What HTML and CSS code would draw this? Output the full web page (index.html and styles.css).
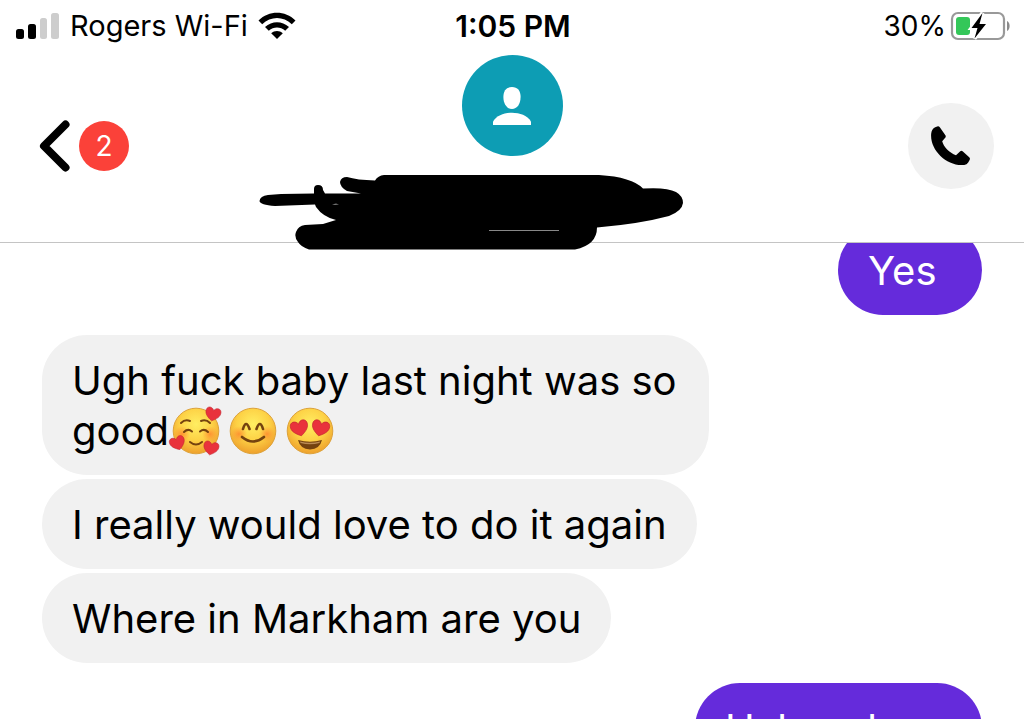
FILE: index.html
```
<!DOCTYPE html>
<html lang="en">

<head>
    <meta charset="UTF-8">
    <meta name="viewport" content="width=device-width, initial-scale=1.0">
    <title>Messages</title>
    <link rel="stylesheet" href="styles.css">
</head>

<body>
    <div class="phone">
        <header class="header">
            <div class="status-bar">
                <div class="status-left">
                    <svg class="signal" width="44" height="28" viewBox="0 0 44 28" aria-hidden="true">
                        <rect x="0" y="17" width="8" height="10" rx="2.5" fill="#000" />
                        <rect x="12" y="12" width="8" height="15" rx="2.5" fill="#000" />
                        <rect x="24" y="6" width="7" height="21" rx="2.5" fill="#cdcdcd" />
                        <rect x="35" y="1" width="8" height="26" rx="2.5" fill="#cdcdcd" />
                    </svg>
                    <span class="carrier">Rogers Wi-Fi</span>
                    <svg class="wifi" width="38" height="28" viewBox="0 0 38 28" aria-hidden="true">
                        <path d="M0.5 8.5C11 -1.8 27 -1.8 37.5 8.5L33.8 12.2C25.2 4 12.8 4 4.2 12.2Z" />
                        <path d="M7 15C14 8.6 24 8.6 31 15L27.2 18.7C22.3 14.5 15.7 14.5 10.8 18.7Z" />
                        <path d="M13.2 21.2C16.6 18.3 21.4 18.3 24.8 21.2L19 27Z" />
                    </svg>
                </div>
                <div class="clock">1:05 PM</div>
                <div class="status-right">
                    <span>30%</span>
                    <svg class="battery" width="60" height="30" viewBox="0 0 60 30" aria-hidden="true">
                        <rect x="2" y="2" width="52" height="26" rx="6" fill="#fff" stroke="#999" stroke-width="2.2" />
                        <path d="M57 10C60.500 11.500 60.500 18.500 57 20Z" fill="#8a8a8a" />
                        <rect x="6" y="6" width="14" height="18" rx="3" fill="#34c759" />
                        <path d="M32.500 2L21.500 17H27.500L24.500 27.500L36 13H29.500Z" fill="#000" stroke="#fff" stroke-width="4" paint-order="stroke" />
                    </svg>
                </div>
            </div>

            <div class="contact-bar">
                <button type="button" class="back-btn" aria-label="Back, 2 unread">
                    <svg width="32" height="52" viewBox="0 0 32 52" aria-hidden="true">
                        <path d="M27.500 4.500L6 26L27.500 47.500" fill="none" stroke="#000" stroke-width="8" stroke-linecap="round" stroke-linejoin="round" />
                    </svg>
                    <span class="unread">2</span>
                </button>
                <div class="avatar">
                    <svg width="38" height="38" viewBox="0 0 38 38" aria-hidden="true">
                        <path d="M19 0C24.5 0 27.600 3.500 27.600 10C27.600 17 24 22 19 22C14 22 10.400 17 10.400 10C10.400 3.500 13.500 0 19 0Z" fill="#fff" />
                        <path d="M0 38V34.500C4 28.500 11 25.800 19 25.800C27 25.800 34 28.500 38 34.500V38Z" fill="#fff" />
                    </svg>
                </div>
                <button type="button" class="call-btn" aria-label="Call">
                    <svg width="40" height="40" viewBox="0 0 40 40" aria-hidden="true">
                        <path d="M4.200 1.300L6.200 0.400Q7.800 -0.200 8.800 1.300L14.400 9.200Q15.200 10.600 14.200 11.800L11.200 15.300C12.500 20.800 18.500 27 25 29.300L29 25.400Q30.300 24.400 31.600 25.300L38.200 31.200Q39.500 32.400 38.600 34L37.200 36.400Q35.800 38.600 33.200 38.900C16 40.800 -1.500 24 0.200 7.500Q0.600 3 4.200 1.300Z" />
                    </svg>
                </button>
            </div>

            <!-- marker scribble over the contact name -->
            <svg class="scribble" width="426" height="76" viewBox="0 0 426 76" aria-hidden="true">
                <path d="M0.500 26Q1 21 9 20L22 19L55 18.500V14Q55 10 59 10Q64 10 64 15L66 18.500H102L88 16Q81 12 81 7Q82 2 88 2Q98 5 116 5.500Q119 0.500 125 0H340Q373 2 384 13.500Q408 12 417 17Q424 21 424 28Q423 36 410 41Q380 49 338 52.500Q338 70 316 74.500H50Q42 72 39 67Q35 62 37 57Q39 51 46 50L64 49L77 45Q64 42 57 32L56 29.500L16 31Q1 30 0.500 26Z" />
                <path d="M73 29.500L77 28.500L80 29.500L76 30Z" fill="#777" />
                <path d="M230 55.500H300" stroke="#888" stroke-width="1" />
            </svg>
        </header>

        <main class="messages">
            <p class="bubble sent">Yes</p>

            <div class="group">
                <p class="bubble received">Ugh fuck baby last night was so good<span class="emojis" role="img" aria-label="smiling faces"><svg class="emoji" viewBox="0 0 48 48">
                            <defs>
                                <radialGradient id="face" cx="50%" cy="35%" r="65%">
                                    <stop offset="0" stop-color="#ffee62" />
                                    <stop offset="0.550" stop-color="#fdd145" />
                                    <stop offset="1" stop-color="#eea02c" />
                                </radialGradient>
                                <radialGradient id="blush">
                                    <stop offset="0" stop-color="#ff7a2a" stop-opacity="0.700" />
                                    <stop offset="1" stop-color="#ff8a30" stop-opacity="0" />
                                </radialGradient>
                                <path id="heart" d="M0 7C-5 4 -8 1 -7.500 -3C-7 -7 -2 -7.500 0 -3.500C2 -7.500 7 -7 7.500 -3C8 1 5 4 0 7Z" />
                            </defs>
                            <circle cx="24" cy="24" r="22.800" fill="url(#face)" stroke="#dda23a" stroke-width="1" />
                            <circle cx="10" cy="27" r="8" fill="url(#blush)" />
                            <circle cx="38" cy="27" r="8" fill="url(#blush)" />
                            <g fill="none" stroke="#74420f" stroke-width="2" stroke-linecap="round">
                                <path d="M9 16Q13 12 18 14M29 14Q34 12 38 16" />
                                <path d="M12 25Q16 21 20 24.500M28 24.500Q32 21 36 25" />
                                <path d="M18 35Q24 40 30 35" />
                            </g>
                            <g fill="#e9323c" stroke="#bd202c" stroke-width="0.500">
                                <use href="#heart" transform="translate(41 7) rotate(12)" />
                                <use href="#heart" transform="translate(5.500 36) rotate(-20)" />
                                <use href="#heart" transform="translate(39 41) rotate(12)" />
                            </g>
                        </svg><svg class="emoji" viewBox="0 0 48 48">
                            <circle cx="24" cy="24" r="22.800" fill="url(#face)" stroke="#dda23a" stroke-width="1" />
                            <circle cx="10" cy="27" r="8" fill="url(#blush)" />
                            <circle cx="38" cy="27" r="8" fill="url(#blush)" />
                            <g fill="none" stroke="#74420f" stroke-width="2.600" stroke-linecap="round">
                                <path d="M14 22Q17 12 20.500 22M27.500 22Q31 12 34 22" />
                                <path d="M13 30Q24 39 35 30" />
                            </g>
                        </svg><svg class="emoji" viewBox="0 0 48 48">
                            <circle cx="24" cy="24" r="22.800" fill="url(#face)" stroke="#dda23a" stroke-width="1" />
                            <g fill="#e9323c" stroke="#bd202c" stroke-width="0.500">
                                <use href="#heart" transform="translate(13.500 21) rotate(-14) scale(1.150)" />
                                <use href="#heart" transform="translate(34.500 21) rotate(14) scale(1.150)" />
                            </g>
                            <path d="M12 33Q24 36.500 36 33Q34 42 24 42.500Q14 42 12 33Z" fill="#74420f" />
                            <path d="M14 34.500Q24 37 34 34.500L33.500 36Q24 38.500 14.500 36Z" fill="#b98a55" />
                        </svg></span></p>
                <p class="bubble received">I really would love to do it again</p>
                <p class="bubble received">Where in Markham are you</p>
            </div>

            <p class="bubble sent">Haha where</p>
        </main>
    </div>
</body>

</html>
```
FILE: styles.css
```
* {
    box-sizing: border-box;
}

body {
    margin: 0;
    font-family: Inter, "Liberation Sans", sans-serif;
    background-color: #fff;
    color: #000;
}

.phone {
    height: 100vh;
    overflow: hidden;
}

.header {
    position: relative;
    z-index: 1;
    background-color: #fff;
    border-bottom: 1px solid #c4c4c4;
}

.status-bar {
    display: grid;
    grid-template-columns: 1fr auto 1fr;
    align-items: center;
    height: 52px;
    padding: 0 14px 0 16px;
    font-size: 28px;
    line-height: 52px;
}

.status-left,
.status-right {
    display: flex;
    align-items: center;
}

.status-left {
    gap: 10px;
}

.status-right {
    justify-content: flex-end;
    gap: 4px;
}

.status-bar svg {
    display: block;
    flex: none;
}

.carrier {
    font-size: 29px;
}

.clock {
    font-size: 30px;
    font-weight: 600;
}

.contact-bar {
    display: grid;
    grid-template-columns: 1fr auto 1fr;
    align-items: center;
    height: 190px;
    padding: 3px 30px 5px;
}

.back-btn {
    display: flex;
    align-items: center;
    gap: 9px;
    justify-self: start;
    padding: 0 8px;
    border: none;
    background: none;
    font-family: inherit;
    cursor: pointer;
}

.unread {
    width: 50px;
    height: 50px;
    border-radius: 50%;
    background-color: #fb4139;
    color: #fff;
    font-size: 28px;
    line-height: 50px;
    text-align: center;
}

.avatar {
    display: flex;
    align-items: center;
    justify-content: center;
    align-self: start;
    width: 101px;
    height: 101px;
    border-radius: 50%;
    background-color: #0d9db4;
}

.call-btn {
    display: flex;
    align-items: center;
    justify-content: center;
    justify-self: end;
    width: 86px;
    height: 86px;
    padding: 0;
    border: none;
    border-radius: 50%;
    background-color: #f1f1f1;
    cursor: pointer;
}

.scribble {
    position: absolute;
    top: 175px;
    left: calc(50% - 253px);
}

.messages {
    display: flex;
    flex-direction: column;
    gap: 20px;
    margin-top: -18px;
    padding: 0 42px;
}

.group {
    display: flex;
    flex-direction: column;
    align-items: flex-start;
    gap: 4px;
}

.bubble {
    min-width: 144px;
    max-width: 71%;
    margin: 0;
    padding: 21px 30px 19px;
    border-radius: 45px;
    font-size: 40px;
    line-height: 50px;
}

.received {
    background-color: #f1f1f1;
}

.sent {
    align-self: flex-end;
    background-color: #652bdb;
    color: #fff;
}

.emojis {
    white-space: nowrap;
}

.emoji {
    width: 48px;
    height: 48px;
    margin: 0 6px 0 3px;
    vertical-align: -10px;
    overflow: visible;
}
```
